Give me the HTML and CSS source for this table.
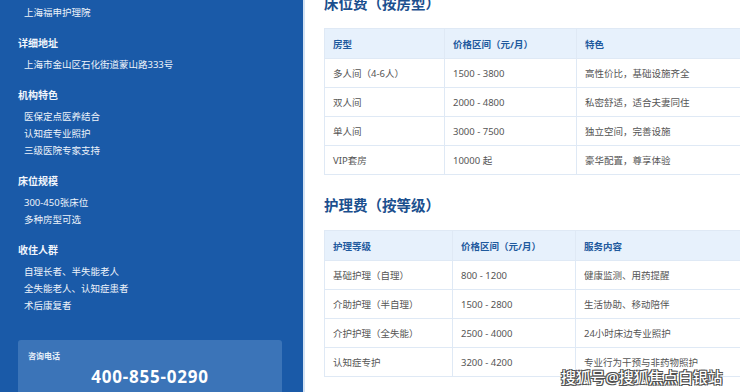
FILE: index.html
```html
<!DOCTYPE html>
<html lang="zh-CN">
<head>
<meta charset="utf-8">
<title>上海福申护理院 收费标准</title>
<link rel="stylesheet" href="styles.css">
</head>
<body>
<div class="page">
  <aside class="sidebar">
    <ul class="list first">
      <li>上海福申护理院</li>
    </ul>
    <section class="group">
      <h3>详细地址</h3>
      <ul class="list"><li>上海市金山区石化街道蒙山路333号</li></ul>
    </section>
    <section class="group">
      <h3>机构特色</h3>
      <ul class="list">
        <li>医保定点医养结合</li>
        <li>认知症专业照护</li>
        <li>三级医院专家支持</li>
      </ul>
    </section>
    <section class="group">
      <h3>床位规模</h3>
      <ul class="list">
        <li>300-450张床位</li>
        <li>多种房型可选</li>
      </ul>
    </section>
    <section class="group">
      <h3>收住人群</h3>
      <ul class="list">
        <li>自理长者、半失能老人</li>
        <li>全失能老人、认知症患者</li>
        <li>术后康复者</li>
      </ul>
    </section>
    <div class="contact">
      <div class="contact-label">咨询电话</div>
      <div class="contact-phone">400-855-0290</div>
    </div>
  </aside>
  <main class="content">
    <h2 class="title">床位费（按房型）</h2>
    <table class="fee t1">
      <thead>
        <tr><th class="c1">房型</th><th class="c2">价格区间（元/月）</th><th>特色</th></tr>
      </thead>
      <tbody>
        <tr><td>多人间（4-6人）</td><td>1500 - 3800</td><td>高性价比，基础设施齐全</td></tr>
        <tr><td>双人间</td><td>2000 - 4800</td><td>私密舒适，适合夫妻同住</td></tr>
        <tr><td>单人间</td><td>3000 - 7500</td><td>独立空间，完善设施</td></tr>
        <tr><td>VIP套房</td><td>10000 起</td><td>豪华配置，尊享体验</td></tr>
      </tbody>
    </table>
    <h2 class="title second">护理费（按等级）</h2>
    <table class="fee t2">
      <thead>
        <tr><th class="c1">护理等级</th><th class="c2">价格区间（元/月）</th><th>服务内容</th></tr>
      </thead>
      <tbody>
        <tr><td>基础护理（自理）</td><td>800 - 1200</td><td>健康监测、用药提醒</td></tr>
        <tr><td>介助护理（半自理）</td><td>1500 - 2800</td><td>生活协助、移动陪伴</td></tr>
        <tr><td>介护护理（全失能）</td><td>2500 - 4000</td><td>24小时床边专业照护</td></tr>
        <tr><td>认知症专护</td><td>3200 - 4200</td><td>专业行为干预与非药物照护</td></tr>
      </tbody>
    </table>
  </main>
  <div class="watermark">搜狐号@搜狐焦点白银站</div>
</div>
</body>
</html>
```
FILE: styles.css
```css
* { box-sizing: border-box; }
html, body {
  margin: 0;
  padding: 0;
  width: 740px;
  height: 392px;
  overflow: hidden;
  background: #ffffff;
  font-family: "Noto Sans", "Noto Sans CJK SC", sans-serif;
}
.page {
  position: relative;
  display: flex;
  width: 740px;
  height: 392px;
  overflow: hidden;
}
.sidebar {
  flex: 0 0 305px;
  background: #1a5aa8;
  color: #eef3fa;
  padding: 4px 21px 0 18px;
  border-right: 2px solid #d3e2f3;
}
.list {
  list-style: none;
  margin: 0;
  padding: 0 0 0 6px;
}
.list li {
  font-size: 9.5px;
  line-height: 17px;
  height: 17px;
  white-space: nowrap;
}
.group {
  margin-top: 14px;
}
.group h3 {
  margin: 0 0 4px 0;
  font-size: 10px;
  line-height: 17px;
  font-weight: 700;
  color: #f2f6fc;
}
.contact {
  margin-top: 26px;
  background: #3b74b8;
  border-radius: 3px;
  padding: 10px;
  height: 70px;
}
.contact-label {
  font-size: 8px;
  line-height: 12px;
  font-weight: 700;
  color: #e6eef8;
}
.contact-phone {
  margin-top: 4px;
  text-align: center;
  font-size: 17px;
  line-height: 22px;
  font-weight: 700;
  letter-spacing: 0.8px;
  color: #ffffff;
}
.content {
  flex: 1 0 auto;
  margin-top: -7px;
  padding-left: 19px;
}
.title {
  margin: 0;
  font-size: 14.5px;
  line-height: 20px;
  font-weight: 700;
  color: #1b4f8e;
  white-space: nowrap;
}
.title.second {
  margin-top: 20px;
}
.fee {
  margin-top: 15px;
  border-collapse: collapse;
  width: 520px;
  table-layout: fixed;
}
.t2 { margin-top: 15px; }
.fee th, .fee td {
  border: 1px solid #dfe9f5;
  text-align: left;
  padding: 0 8px;
  white-space: nowrap;
  font-size: 9.5px;
}
.fee th {
  height: 30px;
  background: #e7f1fc;
  color: #1f5a9e;
  font-weight: 700;
}
.fee td {
  height: 29px;
  color: #555555;
}
.t1 .c1 { width: 120px; }
.t1 .c2 { width: 132px; }
.t2 .c1 { width: 128px; }
.t2 .c2 { width: 123px; }
.watermark {
  position: absolute;
  left: 561px;
  top: 367px;
  font-size: 15px;
  line-height: 20px;
  color: #ffffff;
  white-space: nowrap;
  font-weight: 500;
  letter-spacing: -0.2px;
  text-shadow: 0 0 1px #222, 1px 1px 0 #555, -1px -1px 0 #555, 1px -1px 0 #555, -1px 1px 0 #555;
}
```
